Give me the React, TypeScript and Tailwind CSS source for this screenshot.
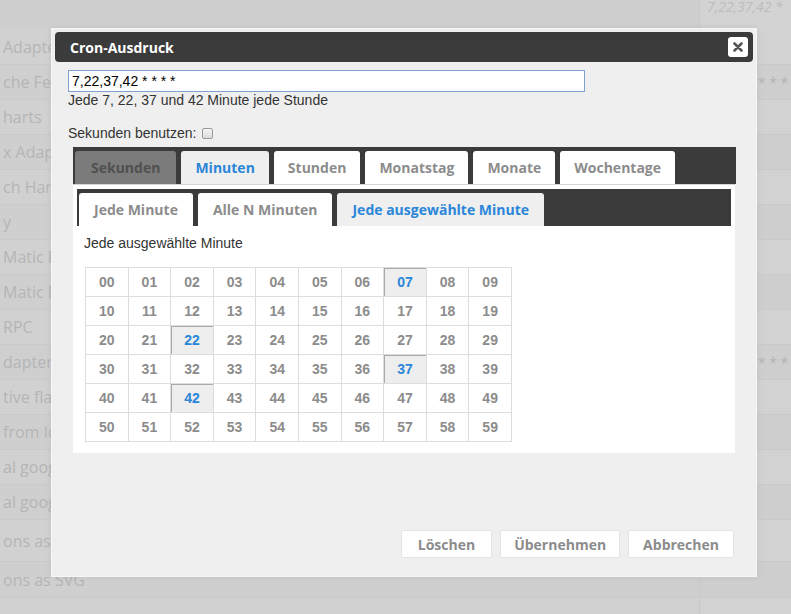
import React from "react";

const leftRows: { t: string; h: number; r?: string }[] = [
  { t: "Adapter", h: 35 },
  { t: "che Feiertage", h: 35, r: "7,22,37 * * * *" },
  { t: "harts", h: 35 },
  { t: "x Adapter", h: 35 },
  { t: "ch Harmony", h: 35 },
  { t: "y", h: 35 },
  { t: "Matic RPC", h: 35 },
  { t: "Matic RPC", h: 35 },
  { t: "RPC", h: 35 },
  { t: "dapter", h: 35, r: "7,22,37 * * * *" },
  { t: "tive flavor", h: 35 },
  { t: "from Icons", h: 35 },
  { t: "al google", h: 35 },
  { t: "al google", h: 35 },
  { t: "ons as SVG", h: 42 },
  { t: "ons as SVG", h: 36 },
  { t: "", h: 36 },
];

const outerTabs = [
  { t: "Sekunden", kind: "dark" },
  { t: "Minuten", kind: "active" },
  { t: "Stunden", kind: "" },
  { t: "Monatstag", kind: "" },
  { t: "Monate", kind: "" },
  { t: "Wochentage", kind: "" },
];

const innerTabs = [
  { t: "Jede Minute", kind: "" },
  { t: "Alle N Minuten", kind: "" },
  { t: "Jede ausgewählte Minute", kind: "active" },
];

const selected = [7, 22, 37, 42];

const openSans = { fontFamily: '"Open Sans", "Liberation Sans", sans-serif' };
const arial = { fontFamily: '"Liberation Sans", Arial, sans-serif' };

function Tab({ t, kind, inner }: { t: string; kind: string; inner?: boolean }) {
  const base =
    "h-[33px] rounded-t-[3px] flex items-center text-[14px] font-bold leading-none shrink-0";
  const pad = inner ? "px-[15px]" : kind === "dark" ? "px-[16px]" : "px-[14px]";
  const cls =
    kind === "dark"
      ? "bg-[#7b7b7b] text-[#505050]"
      : kind === "active"
      ? "bg-[#efefef] text-[#2b86d9]"
      : "bg-white text-[#8c8c8c]";
  return (
    <div className={`${base} ${pad} ${cls}`} style={openSans}>
      {t}
    </div>
  );
}

export default function App() {
  const rows = [0, 1, 2, 3, 4, 5];
  const cols = [0, 1, 2, 3, 4, 5, 6, 7, 8, 9];
  const buttons = [
    { t: "Löschen", p: "px-[16px]" },
    { t: "Übernehmen", p: "px-[13px]" },
    { t: "Abbrechen", p: "px-[14px]" },
  ];
  return (
    <div className="relative w-[791px] h-[614px] overflow-hidden bg-[#cfcfcf]" style={openSans}>
      {/* background table */}
      <div className="flex w-full">
        <div className="w-[699px] shrink-0 flex flex-col">
          <div className="h-[30px]" />
          {leftRows.map((r, i) => (
            <div
              key={i}
              className={`flex items-center pl-[3px] text-[16px] text-[#b5b5b5] border-b border-[#cacaca] ${
                i % 2 ? "bg-[#cfcfcf]" : "bg-[#d1d1d1]"
              }`}
              style={{ height: r.h }}
            >
              {r.t}
            </div>
          ))}
        </div>
        <div className="flex-1 min-w-0 flex flex-col border-l border-[#c8c8c8]">
          <div className="h-[30px] pl-[7px] bg-[#d3d3d3] text-[14px] leading-[13px] italic text-[#bdbdbd] whitespace-nowrap">
            7,22,37,42 *
          </div>
          {leftRows.map((r, i) => (
            <div
              key={i}
              className={`flex items-center pl-[7px] text-[14px] text-[#b3b3b3] whitespace-nowrap border-b border-[#cacaca] ${
                i % 2 ? "bg-[#cecece]" : "bg-[#d2d2d2]"
              }`}
              style={{ height: r.h }}
            >
              {r.r ?? ""}
            </div>
          ))}
        </div>
      </div>

      {/* dialog */}
      <div className="absolute left-[51px] top-[28px] w-[706px] h-[549px] bg-[#efefef] border border-[#f6f6f6] p-[3px] flex flex-col shadow-[0_0_6px_rgba(0,0,0,0.08)]">
        <div className="h-[30px] rounded-[4px] bg-[#3b3b3b] flex items-center justify-between pl-[15px] pr-[5px]">
          <span className="text-white text-[14px] font-bold" style={openSans}>
            Cron-Ausdruck
          </span>
          <div className="w-[20px] h-[20px] bg-white rounded-[3px] flex items-center justify-center">
            <svg width="10" height="10" viewBox="0 0 10 10">
              <path d="M1.5 1.5 L8.5 8.5 M8.5 1.5 L1.5 8.5" stroke="#555" strokeWidth="2.6" strokeLinecap="round" />
            </svg>
          </div>
        </div>

        <div className="pl-[13px] flex flex-col flex-1" style={arial}>
          <input
            readOnly
            value="7,22,37,42 * * * *"
            className="mt-[8px] w-[517px] h-[22px] border border-[#7ea1cf] bg-white px-[3px] text-[14px] text-black outline-none"
            style={arial}
          />
          <div className="text-[14px] leading-[16px] text-[#333]">Jede 7, 22, 37 und 42 Minute jede Stunde</div>
          <div className="mt-[17px] flex items-center text-[14px] leading-[16px] text-[#333]">
            <span>Sekunden benutzen:</span>
            <span className="ml-[6px] w-[11px] h-[11px] border border-[#9a9a9a] rounded-[2px] bg-gradient-to-b from-[#f4f4f4] to-[#dcdcdc]" />
          </div>

          {/* outer tabs */}
          <div className="mt-[6px] ml-[5px] w-[663px] flex flex-col">
            <div className="h-[37px] bg-[#3b3b3b] flex items-end gap-[5px] pl-[2px]">
              {outerTabs.map((t) => (
                <Tab key={t.t} t={t.t} kind={t.kind} />
              ))}
            </div>
            <div className="bg-white border-t border-[#d4d4d4] px-[4px] pt-[4px] pb-[11px] w-[662px]">
              <div className="h-[37px] bg-[#3b3b3b] flex items-end gap-[5px] pl-[2px]">
                {innerTabs.map((t) => (
                  <Tab key={t.t} t={t.t} kind={t.kind} inner />
                ))}
              </div>
              <div className="mt-[9px] pl-[7px] text-[14px] leading-[16px] text-[#333]" style={arial}>
                Jede ausgewählte Minute
              </div>
              <div className="mt-[16px] ml-[8px] w-[427px] border-t border-l border-[#dddddd] flex flex-col">
                {rows.map((r) => (
                  <div key={r} className="flex">
                    {cols.map((c) => {
                      const n = r * 10 + c;
                      const sel = selected.includes(n);
                      return (
                        <div
                          key={c}
                          className={`h-[29px] flex-1 flex items-center justify-center border-r border-b border-[#dddddd] text-[14px] font-bold ${
                            sel
                              ? "bg-[#eeeeee] text-[#2b86d9] shadow-[inset_1px_1px_0_#a9a9a9]"
                              : "bg-white text-[#8c8c8c]"
                          }`}
                          style={arial}
                        >
                          {String(n).padStart(2, "0")}
                        </div>
                      );
                    })}
                  </div>
                ))}
              </div>
            </div>
          </div>

          <div className="mt-auto mb-[15px] flex justify-end gap-[8px] pr-[19px]">
            {buttons.map((b) => (
              <div
                key={b.t}
                className={`h-[28px] ${b.p} bg-white border border-[#e4e4e4] rounded-[2px] flex items-center text-[14px] font-bold text-[#8c8c8c]`}
                style={openSans}
              >
                {b.t}
              </div>
            ))}
          </div>
        </div>
      </div>
    </div>
  );
}
